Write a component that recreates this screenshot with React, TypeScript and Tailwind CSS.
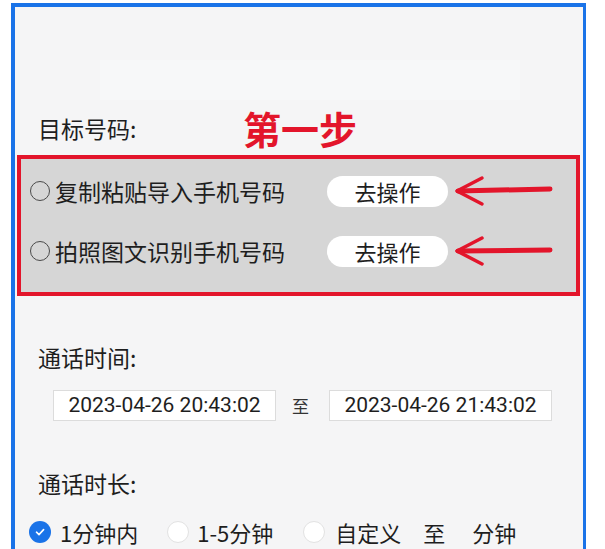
import React from "react";

const font = { fontFamily: '"Noto Sans CJK SC", "Noto Sans", sans-serif' };

function Arrow({ tilt = 0 }: { tilt?: number }) {
  return (
    <svg width="104" height="36" viewBox="0 0 104 36" className="shrink-0">
      <path
        d={`M6 18 L98 ${18 - tilt}`}
        stroke="#e3152b"
        strokeWidth="5"
        strokeLinecap="round"
        fill="none"
      />
      <path
        d="M30 5 L5 18 L30 31"
        stroke="#e3152b"
        strokeWidth="3.5"
        strokeLinecap="round"
        strokeLinejoin="round"
        fill="none"
      />
    </svg>
  );
}

function OptionRow({ label, tilt }: { label: string; tilt: number }) {
  return (
    <div className="flex h-[40px] items-center">
      <div className="flex w-[297px] items-center">
        <span className="h-[20px] w-[20px] shrink-0 rounded-full border-[1.5px] border-[#4a4a4a]" />
        <span className="ml-[5px] text-[23px] text-[#1e1e1e]">{label}</span>
      </div>
      <button className="flex h-[31px] w-[121px] items-center justify-center rounded-full bg-white text-[22px] text-[#1e1e1e]">
        去操作
      </button>
      <div className="ml-[4px]">
        <Arrow tilt={tilt} />
      </div>
    </div>
  );
}

function DateBox({ value }: { value: string }) {
  return (
    <div
      className="flex h-[31px] w-[223px] items-center justify-center border border-[#dcdcdc] bg-white text-[21px] text-[#1e1e1e]"
      style={{ fontFamily: "Roboto, sans-serif" }}
    >
      {value}
    </div>
  );
}

export default function App() {
  return (
    <div className="h-[549px] w-full overflow-hidden bg-white" style={font}>
      <div className="ml-[11px] mt-[3px] h-[560px] w-[575px] border-l-4 border-r-[3px] border-t-4 border-[#1a73e8] bg-[#f5f5f6]">
        <div className="ml-[85px] mt-[53px] h-[40px] w-[420px] bg-[#f7f8f9]" />

        <div className="mt-[10px] flex h-[36px] items-center pl-[23px]">
          <span className="w-[205px] text-[23px] text-[#1e1e1e]">目标号码:</span>
          <span className="text-[38px] font-bold leading-none text-[#e3152b]">第一步</span>
        </div>

        <div className="ml-[2px] mt-[9px] h-[141px] w-[563px] border-4 border-[#e3152b] bg-[#d6d6d6] pl-[9px] pt-[12px]">
          <OptionRow label="复制粘贴导入手机号码" tilt={2} />
          <div className="mt-[20px]">
            <OptionRow label="拍照图文识别手机号码" tilt={1} />
          </div>
        </div>

        <div className="mt-[43px] flex h-[36px] items-center pl-[23px] text-[23px] text-[#1e1e1e]">
          通话时间:
        </div>

        <div className="mt-[15px] flex items-center pl-[38px]">
          <DateBox value="2023-04-26 20:43:02" />
          <span className="ml-[16px] text-[17px] text-[#333]">至</span>
          <span className="ml-[20px]">
            <DateBox value="2023-04-26 21:43:02" />
          </span>
        </div>

        <div className="mt-[44px] flex h-[36px] items-center pl-[23px] text-[23px] text-[#1e1e1e]">
          通话时长:
        </div>

        <div className="mt-[13px] flex h-[36px] items-center pl-[14px] text-[22px] text-[#1e1e1e]">
          <span className="flex h-[22px] w-[22px] items-center justify-center rounded-full bg-[#1a73e8]">
            <svg width="12" height="12" viewBox="0 0 12 12">
              <path d="M2.5 6.2 L5 8.6 L9.6 3.6" stroke="white" strokeWidth="1.6" fill="none" strokeLinecap="round" strokeLinejoin="round" />
            </svg>
          </span>
          <span className="ml-[9px]">1分钟内</span>
          <span className="ml-[29px] h-[22px] w-[22px] rounded-full border border-[#e2e2e2] bg-white" />
          <span className="ml-[8px]">1-5分钟</span>
          <span className="ml-[30px] h-[22px] w-[22px] rounded-full border border-[#e2e2e2] bg-white" />
          <span className="ml-[10px]">自定义</span>
          <span className="ml-[22px]">至</span>
          <span className="ml-[27px]">分钟</span>
        </div>
      </div>
    </div>
  );
}
